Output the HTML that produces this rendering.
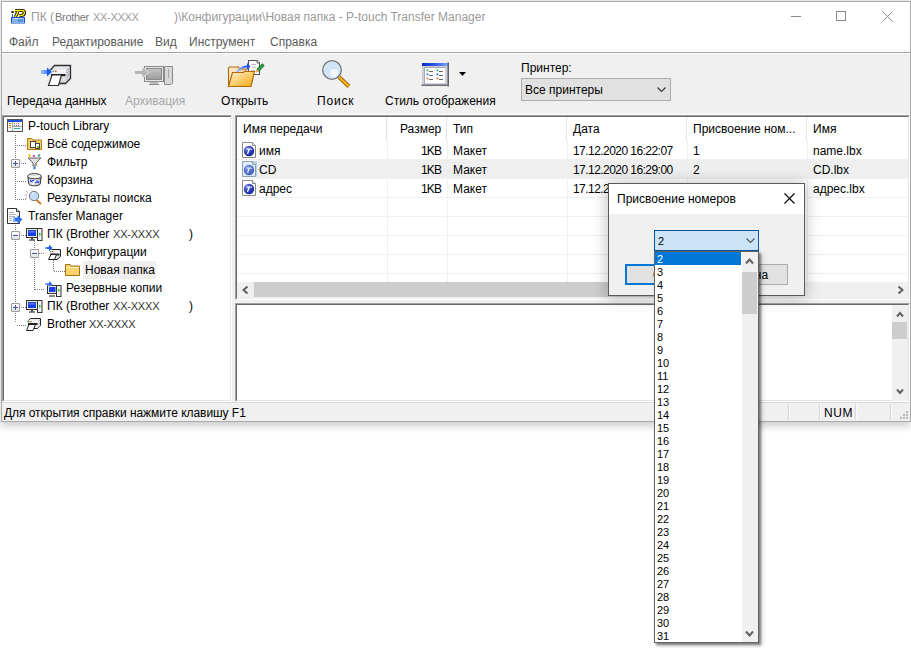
<!DOCTYPE html>
<html><head><meta charset="utf-8"><style>
*{box-sizing:border-box;margin:0;padding:0}
html,body{width:911px;height:648px;overflow:hidden;background:#fff}
body{position:relative;font-family:"Liberation Sans",sans-serif;font-size:12px;color:#000;line-height:14px}
.a{position:absolute;white-space:pre}
svg.a{overflow:visible}
</style></head><body>
<div class="a" style="left:0px;top:0px;width:911px;height:422px;background:#f0f0f0;box-shadow:0 4px 8px rgba(0,0,0,.2)"></div>
<div class="a" style="left:0px;top:0px;width:911px;height:1px;background:#e6e6e6;"></div>
<div class="a" style="left:0px;top:0px;width:1px;height:422px;background:#e8e8e8;"></div>
<div class="a" style="left:1px;top:1px;width:910px;height:421px;background:transparent;border:1px solid #aaa"></div>
<div class="a" style="left:2px;top:2px;width:908px;height:30px;background:#fff;"></div>
<svg class="a" style="left:10px;top:9px;" width="16" height="16" viewBox="0 0 16 16">
<path d="M2 5 L3 5 L3 8 L15 8 L15 14.5 L1 14.5 L1 8 L2 8 Z" fill="#1d55c8"/>
<rect x="2" y="9" width="12" height="5" fill="#86b2ee"/>
<rect x="3" y="9" width="10" height="1" fill="#c8def8"/>
<rect x="8" y="10" width="5" height="3" fill="#5b8fe4"/>
<path d="M5 1.5 L12 1.5 C15 1.5,15 5,13 6 L9 7" stroke="#000" stroke-width="3.2" fill="none" stroke-linejoin="round"/>
<path d="M8 2 L5.5 8" stroke="#000" stroke-width="3.2"/>
<path d="M4 3 L1.5 3" stroke="#000" stroke-width="2"/>
<path d="M5 1.5 L12 1.5 C15 1.5,15 5,13 6 L9 7" stroke="#ffee00" stroke-width="1.4" fill="none" stroke-linejoin="round"/>
<path d="M8 2 L5.5 8" stroke="#ffee00" stroke-width="1.5"/>
<path d="M4 3 L2.5 3" stroke="#ffd000" stroke-width="1"/>
</svg>
<div class="a" style="left:31px;top:10px;color:#9a9a9a;">ПК (</div>
<div class="a" style="left:55px;top:10px;color:#7a7a7a;font-size:11px;letter-spacing:-0.3px">Brother</div>
<div class="a" style="left:93px;top:10px;color:#9a9a9a;font-size:11px;letter-spacing:-0.3px">XX-XXXX</div>
<div class="a" style="left:174px;top:10px;color:#9a9a9a;">)\Конфигурации\Новая папка - P-touch Transfer Manager</div>
<div class="a" style="left:791px;top:16px;width:10px;height:1px;background:#8a8a8a;"></div>
<div class="a" style="left:836px;top:11px;width:10px;height:10px;background:transparent;border:1px solid #8a8a8a"></div>
<svg class="a" style="left:882px;top:11px;" width="11" height="11" viewBox="0 0 11 11"><path d="M0.5 0.5 L10.5 10.5 M10.5 0.5 L0.5 10.5" stroke="#8a8a8a" stroke-width="1"/></svg>
<div class="a" style="left:2px;top:32px;width:908px;height:20px;background:#fff;"></div>
<div class="a" style="left:2px;top:50px;width:908px;height:1px;background:#f5f5f5;"></div>
<div class="a" style="left:2px;top:52px;width:908px;height:1px;background:#a0a0a0;"></div>
<div class="a" style="left:9px;top:35px;color:#5a5a5a;">Файл</div>
<div class="a" style="left:52px;top:35px;color:#5a5a5a;">Редактирование</div>
<div class="a" style="left:155px;top:35px;color:#5a5a5a;">Вид</div>
<div class="a" style="left:189px;top:35px;color:#5a5a5a;">Инструмент</div>
<div class="a" style="left:270px;top:35px;color:#5a5a5a;">Справка</div>
<div class="a" style="left:2px;top:53px;width:908px;height:1px;background:#fff;"></div>
<div class="a" style="left:2px;top:114px;width:908px;height:1px;background:#fbfbfb;"></div>
<svg class="a" style="left:40px;top:64px;" width="32" height="23" viewBox="0 0 32 23">
<defs><linearGradient id="ar" x1="0" x2="1"><stop offset="0" stop-color="#a8c8fa"/><stop offset="1" stop-color="#3c7af5"/></linearGradient>
<linearGradient id="pf" x1="0" y1="0" x2="0" y2="1"><stop offset="0" stop-color="#fafafa"/><stop offset="1" stop-color="#d0d0d8"/></linearGradient></defs>
<path d="M10 6 L14.5 1.5 L30.5 1.5 L25.5 6 Z" fill="#e6e6ec"/>
<path d="M25.5 6 L30.5 1.5 L30.5 14.5 L25.5 19.5 Z" fill="#cfcfd8"/>
<rect x="10" y="6" width="15.5" height="13.5" fill="url(#pf)"/>
<path d="M10 6.5 L14.5 1.5 L30.5 1.5 L30.5 14.5 L25.5 19.5 L19 19.5" fill="none" stroke="#2e2e2e" stroke-width="1.3"/>
<path d="M27 6 L29.5 4 M27 9 L29.5 7 M27 12 L29.5 10" stroke="#9a9aa8" stroke-width="0.8"/>
<rect x="11" y="10" width="14.5" height="2.2" fill="#1e1e1e"/>
<path d="M12 11 L21.5 11 L18.5 21.5 L8.5 21.5 Z" fill="#fff" stroke="#2e2e2e" stroke-width="1.2"/>
<rect x="12.5" y="6.5" width="1.6" height="1.6" fill="#30b060"/>
<rect x="15" y="6.5" width="1.6" height="1.6" fill="#f04030"/>
<rect x="0.7" y="6" width="7" height="4" fill="url(#ar)"/>
<path d="M7 3.5 L12 8 L7 12.5 Z" fill="#1f5ef2"/>
</svg>
<svg class="a" style="left:134px;top:65px;" width="40" height="21" viewBox="0 0 40 21">
<defs><linearGradient id="sc" x1="0" y1="0" x2="0" y2="1"><stop offset="0" stop-color="#c4c4c4"/><stop offset="1" stop-color="#9c9c9c"/></linearGradient></defs>
<rect x="10.5" y="1.5" width="19" height="15" fill="#e4e4e4" stroke="#8a8a8a"/>
<rect x="12.5" y="3.5" width="15" height="11" fill="url(#sc)" stroke="#8a8a8a"/>
<path d="M16 18 L24 18 M15 19.5 L25 19.5" stroke="#8a8a8a" stroke-width="1"/>
<rect x="19" y="16" width="2" height="2" fill="#aaa"/>
<path d="M31 1.5 L38.5 1.5 L38.5 18 L37 19.5 L30.5 19.5 L30.5 1.5" fill="#d8d8d8" stroke="#8a8a8a"/>
<path d="M34.5 4 L34.5 13" stroke="#a8a8a8"/>
<path d="M0.5 5.5 L8 5.5 L8 1.5 L14.5 7.5 L8 13.5 L8 9.5 L0.5 9.5 Z" fill="#b4b4b4" stroke="#f6f6f6" stroke-width="0.8"/>
</svg>
<svg class="a" style="left:227px;top:59px;" width="38" height="29" viewBox="0 0 38 29">
<defs><linearGradient id="ff" x1="0" y1="0" x2="1" y2="1"><stop offset="0" stop-color="#fff4dc"/><stop offset="0.45" stop-color="#fdd27a"/><stop offset="1" stop-color="#f2aa10"/></linearGradient>
<linearGradient id="fb" x1="0" y1="0" x2="1" y2="1"><stop offset="0" stop-color="#fff0d8"/><stop offset="1" stop-color="#f6c070"/></linearGradient>
<linearGradient id="oa" x1="0" x2="1"><stop offset="0" stop-color="#9cc4ff"/><stop offset="1" stop-color="#1f50f5"/></linearGradient></defs>
<path d="M1.5 27.5 L1.5 9 L2.5 8 L11.5 8 L12.5 10 L19 10 L19 14 Z" fill="url(#fb)" stroke="#b06a08" stroke-width="1.1"/>
<path d="M21.5 1.5 L30 1.5 L32.5 4 L32.5 15.5 L21.5 15.5 Z" fill="#fafafa" stroke="#555" stroke-width="1.1"/>
<path d="M30 1.5 L30 4 L32.5 4" fill="#eee" stroke="#555" stroke-width="0.8"/>
<path d="M24 5.5 L29 5.5 M25 8.5 L29 8.5 M24 11.5 L28 11.5" stroke="#c4c4c4" stroke-width="1"/>
<path d="M30.5 11.5 L36.5 5.5" stroke="#1a6e2e" stroke-width="3.2"/>
<path d="M30.5 11.5 L36.5 5.5" stroke="#2fae4a" stroke-width="1.6"/>
<path d="M29 13 L31 11" stroke="#f0a060" stroke-width="2"/>
<path d="M10 13 C13 9,16 7.5,20.5 7.5" stroke="url(#oa)" stroke-width="2" fill="none"/>
<path d="M20 4 L23.5 7.5 L20 11 Z" fill="#1f50f5"/>
<path d="M5.5 13.5 L16.5 13.5 L17.5 12.5 L27.5 12.5 L24 27.5 L1.5 27.5 Z" fill="url(#ff)" stroke="#b06a08" stroke-width="1.2"/>
</svg>
<svg class="a" style="left:321px;top:60px;" width="31" height="29" viewBox="0 0 31 29">
<path d="M18 17 L28 26.5" stroke="#a65d00" stroke-width="4"/>
<path d="M18 17 L28 26.5" stroke="#f3b21a" stroke-width="2.4"/>
<circle cx="11" cy="10" r="9.3" fill="#d2e4f8" stroke="#777" stroke-width="1.3"/>
<circle cx="13" cy="13" r="4" fill="#f3f8fe"/>
</svg>
<svg class="a" style="left:421px;top:62px;" width="29" height="25" viewBox="0 0 29 25">
<defs><linearGradient id="tb" x1="0" x2="1"><stop offset="0" stop-color="#0b2bd0"/><stop offset="0.5" stop-color="#3058e0"/><stop offset="1" stop-color="#78a8f8"/></linearGradient></defs>
<rect x="1" y="1" width="27" height="23" fill="#cdcdd6"/>
<rect x="1" y="1" width="26" height="3" fill="url(#tb)"/>
<rect x="26.5" y="0.5" width="1.5" height="24" fill="#5c5c68"/>
<rect x="0.5" y="22.5" width="27.5" height="1.5" fill="#6c6c78"/>
<rect x="3" y="5" width="22" height="17" fill="#a8a8b4"/>
<rect x="4" y="6" width="20.5" height="15.5" fill="#fff"/>
<rect x="5.5" y="7.5" width="1.8" height="1.8" fill="#2fae6a"/><rect x="8" y="9" width="4" height="0.9" fill="#555"/>
<rect x="15.5" y="7.5" width="1.8" height="1.8" fill="#2fae6a"/><rect x="18" y="9" width="4" height="0.9" fill="#555"/>
<rect x="5.5" y="11.5" width="1.8" height="1.8" fill="#2a6ef0"/><rect x="8" y="13" width="4" height="0.9" fill="#555"/>
<rect x="15.5" y="11.5" width="1.8" height="1.8" fill="#2a6ef0"/><rect x="18" y="13" width="4" height="0.9" fill="#555"/>
<rect x="5.5" y="15.5" width="1.8" height="1.8" fill="#d2782a"/><rect x="8" y="17" width="4" height="0.9" fill="#555"/>
<rect x="15.5" y="15.5" width="1.8" height="1.8" fill="#d2782a"/><rect x="18" y="17" width="4" height="0.9" fill="#555"/>
</svg>
<svg class="a" style="left:459px;top:72px;" width="8" height="5" viewBox="0 0 8 5"><path d="M0 0 L7 0 L3.5 4 Z" fill="#000"/></svg>
<div class="a" style="left:7px;top:94px;">Передача данных</div>
<div class="a" style="left:125px;top:94px;color:#a8a8a8;">Архивация</div>
<div class="a" style="left:221px;top:94px;">Открыть</div>
<div class="a" style="left:317px;top:94px;letter-spacing:0.8px">Поиск</div>
<div class="a" style="left:385px;top:94px;">Стиль отображения</div>
<div class="a" style="left:521px;top:61px;">Принтер:</div>
<div class="a" style="left:521px;top:78px;width:150px;height:23px;background:#e1e1e1;border:1px solid #adadad"></div>
<div class="a" style="left:525px;top:83px;">Все принтеры</div>
<svg class="a" style="left:657px;top:87px;" width="10" height="6" viewBox="0 0 10 6"><path d="M0.5 0.5 L4.5 4.5 L8.5 0.5" stroke="#333" stroke-width="1.1" fill="none"/></svg>
<div class="a" style="left:2px;top:115px;width:230px;height:287px;background:#fff;border-style:solid;border-width:1px;border-color:#a0a0a0 #fff #fff #a0a0a0"></div>
<div class="a" style="left:3px;top:116px;width:228px;height:285px;background:transparent;border-style:solid;border-width:1px;border-color:#696969 #e3e3e3 #e3e3e3 #696969"></div>
<div class="a" style="left:235px;top:115px;width:675px;height:185px;background:#fff;border-style:solid;border-width:1px;border-color:#a0a0a0 #fff #fff #a0a0a0"></div>
<div class="a" style="left:236px;top:116px;width:673px;height:183px;background:transparent;border-style:solid;border-width:1px;border-color:#696969 #e3e3e3 #e3e3e3 #696969"></div>
<div class="a" style="left:235px;top:303px;width:675px;height:99px;background:#fff;border-style:solid;border-width:1px;border-color:#a0a0a0 #fff #fff #a0a0a0"></div>
<div class="a" style="left:236px;top:304px;width:673px;height:97px;background:transparent;border-style:solid;border-width:1px;border-color:#696969 #e3e3e3 #e3e3e3 #696969"></div>
<div class="a" style="left:15px;top:135px;width:1px;height:65px;background:transparent;background-image:repeating-linear-gradient(to bottom,#7c7c7c 0 1px,transparent 1px 2px)"></div>
<div class="a" style="left:15px;top:225px;width:1px;height:97px;background:transparent;background-image:repeating-linear-gradient(to bottom,#7c7c7c 0 1px,transparent 1px 2px)"></div>
<div class="a" style="left:17px;top:145px;width:10px;height:1px;background:transparent;background-image:repeating-linear-gradient(to right,#7c7c7c 0 1px,transparent 1px 2px)"></div>
<div class="a" style="left:17px;top:163px;width:10px;height:1px;background:transparent;background-image:repeating-linear-gradient(to right,#7c7c7c 0 1px,transparent 1px 2px)"></div>
<div class="a" style="left:17px;top:181px;width:10px;height:1px;background:transparent;background-image:repeating-linear-gradient(to right,#7c7c7c 0 1px,transparent 1px 2px)"></div>
<div class="a" style="left:17px;top:199px;width:10px;height:1px;background:transparent;background-image:repeating-linear-gradient(to right,#7c7c7c 0 1px,transparent 1px 2px)"></div>
<div class="a" style="left:17px;top:235px;width:10px;height:1px;background:transparent;background-image:repeating-linear-gradient(to right,#7c7c7c 0 1px,transparent 1px 2px)"></div>
<div class="a" style="left:17px;top:307px;width:10px;height:1px;background:transparent;background-image:repeating-linear-gradient(to right,#7c7c7c 0 1px,transparent 1px 2px)"></div>
<div class="a" style="left:17px;top:325px;width:10px;height:1px;background:transparent;background-image:repeating-linear-gradient(to right,#7c7c7c 0 1px,transparent 1px 2px)"></div>
<div class="a" style="left:34px;top:241px;width:1px;height:49px;background:transparent;background-image:repeating-linear-gradient(to bottom,#7c7c7c 0 1px,transparent 1px 2px)"></div>
<div class="a" style="left:35px;top:253px;width:10px;height:1px;background:transparent;background-image:repeating-linear-gradient(to right,#7c7c7c 0 1px,transparent 1px 2px)"></div>
<div class="a" style="left:35px;top:289px;width:10px;height:1px;background:transparent;background-image:repeating-linear-gradient(to right,#7c7c7c 0 1px,transparent 1px 2px)"></div>
<div class="a" style="left:53px;top:260px;width:1px;height:12px;background:transparent;background-image:repeating-linear-gradient(to bottom,#7c7c7c 0 1px,transparent 1px 2px)"></div>
<div class="a" style="left:54px;top:271px;width:11px;height:1px;background:transparent;background-image:repeating-linear-gradient(to right,#7c7c7c 0 1px,transparent 1px 2px)"></div>
<div class="a" style="left:11px;top:159px;width:9px;height:9px;background:linear-gradient(#fff,#e4e4e4);border:1px solid #9a9a9a;border-radius:1px"></div>
<div class="a" style="left:13px;top:163px;width:5px;height:1px;background:#3a5a9a;"></div>
<div class="a" style="left:15px;top:161px;width:1px;height:5px;background:#3a5a9a;"></div>
<div class="a" style="left:11px;top:231px;width:9px;height:9px;background:linear-gradient(#fff,#e4e4e4);border:1px solid #9a9a9a;border-radius:1px"></div>
<div class="a" style="left:13px;top:235px;width:5px;height:1px;background:#3a5a9a;"></div>
<div class="a" style="left:30px;top:249px;width:9px;height:9px;background:linear-gradient(#fff,#e4e4e4);border:1px solid #9a9a9a;border-radius:1px"></div>
<div class="a" style="left:32px;top:253px;width:5px;height:1px;background:#3a5a9a;"></div>
<div class="a" style="left:11px;top:303px;width:9px;height:9px;background:linear-gradient(#fff,#e4e4e4);border:1px solid #9a9a9a;border-radius:1px"></div>
<div class="a" style="left:13px;top:307px;width:5px;height:1px;background:#3a5a9a;"></div>
<div class="a" style="left:15px;top:305px;width:1px;height:5px;background:#3a5a9a;"></div>
<svg class="a" style="left:7px;top:119px;" width="16" height="13" viewBox="0 0 16 13">
<rect x="0.5" y="0.5" width="15" height="12" fill="#f4f4f4" stroke="#555"/>
<rect x="1" y="1" width="14" height="2" fill="#2050e0"/>
<rect x="5" y="3" width="1" height="9" fill="#aaa"/>
<rect x="6" y="7" width="9" height="1" fill="#aaa"/>
<rect x="2" y="4" width="2" height="1" fill="#d89020"/><rect x="2" y="6" width="2" height="1" fill="#d89020"/><rect x="2" y="8" width="2" height="1" fill="#d89020"/>
<rect x="7" y="4" width="1" height="1" fill="#2c2"/><rect x="9" y="4" width="1" height="1" fill="#d92"/><rect x="11" y="4" width="1" height="1" fill="#e3a"/>
<rect x="7" y="6" width="1" height="1" fill="#36e"/><rect x="9" y="6" width="1" height="1" fill="#e3a"/><rect x="11" y="6" width="1" height="1" fill="#36e"/>
<path d="M7 10 L8 9 L9 10 L10 9 L11 10 L12 9 L13 10" stroke="#3aa" fill="none"/>
</svg>
<svg class="a" style="left:27px;top:137px;" width="15" height="13" viewBox="0 0 15 13">
<path d="M0.5 1.5 L5 1.5 L6 3 L14.5 3 L14.5 12.5 L0.5 12.5 Z" fill="#f7cf6a" stroke="#b07a10"/>
<rect x="3.5" y="4.5" width="5" height="6" fill="#fff" stroke="#444"/>
<rect x="8.5" y="6.5" width="4" height="5" fill="#fff" stroke="#444"/>
<rect x="10" y="9" width="2" height="2" fill="#6c3"/>
</svg>
<svg class="a" style="left:27px;top:154px;" width="15" height="15" viewBox="0 0 15 15">
<circle cx="2.5" cy="1.5" r="1.3" fill="#f5c000"/><circle cx="7" cy="2" r="1.3" fill="#e060c0"/><circle cx="12" cy="1.5" r="1.3" fill="#30b090"/>
<path d="M1 4 L14 4 L9 9 L9 12 L6 12 L6 9 Z" fill="#ddd" stroke="#555" stroke-width="0.9"/>
<circle cx="7.5" cy="14" r="1.2" fill="#3070f0"/>
</svg>
<svg class="a" style="left:27px;top:173px;" width="15" height="14" viewBox="0 0 15 14">
<defs><linearGradient id="rb" x1="0" x2="1"><stop offset="0" stop-color="#c8c8c8"/><stop offset="0.4" stop-color="#f4f4f4"/><stop offset="1" stop-color="#b0b0b0"/></linearGradient></defs>
<path d="M0.8 3.5 L1.8 11 C2.5 13.3,12.5 13.3,13.2 11 L14.2 3.5" fill="url(#rb)" stroke="#333"/>
<ellipse cx="7.5" cy="3.2" rx="6.8" ry="2.6" fill="#fff" stroke="#333"/>
<path d="M3 3.5 C4 1.5,6 1.5,7 3 C8 1.5,10.5 1.5,12 3.5" stroke="#bbb" stroke-width="0.8" fill="none"/>
<path d="M4 8.2 L7 7.2" stroke="#1a3cf0" stroke-width="1.2"/>
<path d="M3.5 6.8 L3.8 8.6 L5.4 9" stroke="#1a3cf0" stroke-width="1" fill="none"/>
<path d="M11 8.8 L8 9.8" stroke="#1a3cf0" stroke-width="1.2"/>
<path d="M11.5 10.2 L11.2 8.4 L9.6 8" stroke="#1a3cf0" stroke-width="1" fill="none"/>
</svg>
<svg class="a" style="left:24px;top:190px;" width="19" height="15" viewBox="0 0 19 15">
<path d="M2 1 L3.5 2.5 M1 5 L3 5 M1.5 8.5 L3 7.5" stroke="#888" stroke-width="0.8"/>
<path d="M12.5 10 L17 14" stroke="#d07010" stroke-width="1.8"/>
<circle cx="10" cy="6" r="4.7" fill="#c4dcf6" stroke="#777" stroke-width="1"/>
<path d="M8 4 L10 3" stroke="#fff" stroke-width="1"/>
</svg>
<svg class="a" style="left:7px;top:208px;" width="16" height="16" viewBox="0 0 16 16">
<path d="M0.5 0.5 L9.5 0.5 L12.5 3.5 L12.5 15.5 L0.5 15.5 Z" fill="#fff" stroke="#333"/>
<path d="M9.5 0.5 L9.5 3.5 L12.5 3.5" fill="#eee" stroke="#333"/>
<path d="M2 4.5 L7 4.5 M2 6.5 L9 6.5 M2 8.5 L8 8.5 M2 10.5 L5 10.5 M2 12.5 L5 12.5" stroke="#b0b0b0"/>
<path d="M6 9.5 L10.5 9.5 L10.5 7 L15.5 11.5 L10.5 16 L10.5 13.5 L6 13.5 Z" fill="#2f72f0"/>
<rect x="6" y="9.5" width="2" height="4" fill="#8ab4fa"/>
</svg>
<svg class="a" style="left:26px;top:228px;" width="17" height="13" viewBox="0 0 17 13">
<rect x="0.5" y="0.5" width="11" height="9" fill="#e8e8e8" stroke="#333"/>
<rect x="2" y="2" width="8" height="6" fill="#1a3ee8"/>
<rect x="3" y="3" width="6" height="1.5" fill="#5a7af0"/>
<path d="M3 12 L9 12" stroke="#333" stroke-width="1.2"/>
<rect x="5" y="10" width="2" height="1.5" fill="#444"/>
<rect x="11.5" y="0.5" width="4.5" height="12" fill="#f0f0f0" stroke="#333"/>
<rect x="13" y="5" width="1.5" height="2.5" fill="#2c2"/>
</svg>
<svg class="a" style="left:26px;top:300px;" width="17" height="13" viewBox="0 0 17 13">
<rect x="0.5" y="0.5" width="11" height="9" fill="#e8e8e8" stroke="#333"/>
<rect x="2" y="2" width="8" height="6" fill="#1a3ee8"/>
<rect x="3" y="3" width="6" height="1.5" fill="#5a7af0"/>
<path d="M3 12 L9 12" stroke="#333" stroke-width="1.2"/>
<rect x="5" y="10" width="2" height="1.5" fill="#444"/>
<rect x="11.5" y="0.5" width="4.5" height="12" fill="#f0f0f0" stroke="#333"/>
<rect x="13" y="5" width="1.5" height="2.5" fill="#2c2"/>
</svg>
<svg class="a" style="left:44px;top:244px;" width="18" height="17" viewBox="0 0 18 17">
<path d="M7.5 5.5 L16.5 5.5 L16.5 12.5 L13 15.5 L5 15.5" fill="#e4e4e4" stroke="#222" stroke-width="1"/>
<rect x="5.5" y="7.5" width="10" height="1.5" fill="#f8f8f8"/>
<rect x="6" y="9.5" width="9.5" height="2" fill="#333"/>
<path d="M7 10.5 L12.5 10.5 L10.5 15.5 L4.5 15.5 Z" fill="#fff" stroke="#222" stroke-width="1"/>
<rect x="6" y="7" width="1.3" height="1.3" fill="#3b3"/><rect x="8" y="7" width="1.3" height="1.3" fill="#e44"/>
<path d="M1 3 L5 3 L5 0.5 L8.5 4 L5 7.5 L5 5 L1 5 Z" fill="#1f5ef2"/>
<rect x="1" y="3" width="2" height="2" fill="#7ea8f8"/>
</svg>
<div class="a" style="left:83px;top:261px;width:73px;height:18px;background:#efefef;"></div>
<svg class="a" style="left:65px;top:263px;" width="15" height="13" viewBox="0 0 15 13">
<path d="M0.5 1.5 L5 1.5 L6 3 L14.5 3 L14.5 12.5 L0.5 12.5 Z" fill="#fbd36a" stroke="#a87010"/>
<rect x="1" y="4" width="13" height="1" fill="#fff3c0"/>
</svg>
<svg class="a" style="left:44px;top:280px;" width="18" height="17" viewBox="0 0 18 17">
<rect x="3.5" y="5.5" width="9" height="8" fill="#e8e8e8" stroke="#333"/>
<rect x="5" y="7" width="6.5" height="5" fill="#1a3ee8"/>
<path d="M5 16 L11 16" stroke="#333" stroke-width="1.2"/>
<rect x="12.5" y="5.5" width="4.5" height="11" fill="#f0f0f0" stroke="#333"/>
<rect x="14" y="9" width="1.5" height="2.5" fill="#2c2"/>
<path d="M1 3 L5 3 L5 0.5 L8.5 4 L5 7.5 L5 5 L1 5 Z" fill="#1f5ef2" stroke="#fff" stroke-width="0.5"/>
<rect x="1" y="3" width="2" height="2" fill="#7ea8f8"/>
</svg>
<svg class="a" style="left:26px;top:317px;" width="16" height="15" viewBox="0 0 16 15">
<path d="M1.5 4 L4.5 1 L15 1 L15 8.5 L11.5 12 L1.5 12 Z" fill="#ececec"/>
<path d="M1.5 4.5 L4.5 1.5 L14.5 1.5 L14.5 8.5 L11.5 11.5 L6 11.5" fill="none" stroke="#222" stroke-width="1"/>
<rect x="2" y="3.5" width="10" height="2" fill="#fcfcfc"/>
<path d="M12.5 4 L14 3 M12.5 7 L14 6 M12.5 10 L14 9" stroke="#999" stroke-width="0.8"/>
<rect x="2" y="6" width="9.5" height="2" fill="#222"/>
<path d="M3 7.5 L9.5 7.5 L7 13.5 L0.5 13.5 Z" fill="#fff" stroke="#222" stroke-width="1"/>
<rect x="2" y="4" width="1.4" height="1.4" fill="#3b3"/><rect x="4.2" y="4" width="1.4" height="1.4" fill="#e44"/>
</svg>
<div class="a" style="left:28px;top:119px;">P-touch Library</div>
<div class="a" style="left:47px;top:137px;">Всё содержимое</div>
<div class="a" style="left:47px;top:155px;">Фильтр</div>
<div class="a" style="left:47px;top:173px;">Корзина</div>
<div class="a" style="left:47px;top:191px;">Результаты поиска</div>
<div class="a" style="left:28px;top:209px;">Transfer Manager</div>
<div class="a" style="left:47px;top:227px;">ПК (Brother</div>
<div class="a" style="left:66px;top:245px;">Конфигурации</div>
<div class="a" style="left:85px;top:263px;">Новая папка</div>
<div class="a" style="left:66px;top:281px;">Резервные копии</div>
<div class="a" style="left:47px;top:299px;">ПК (Brother</div>
<div class="a" style="left:47px;top:317px;">Brother</div>
<div class="a" style="left:189px;top:227px;">)</div>
<div class="a" style="left:189px;top:299px;">)</div>
<div class="a" style="left:113px;top:227px;color:#333;font-size:11px;letter-spacing:-0.2px">XX-XXXX</div>
<div class="a" style="left:113px;top:299px;color:#333;font-size:11px;letter-spacing:-0.2px">XX-XXXX</div>
<div class="a" style="left:89px;top:317px;color:#333;font-size:11px;letter-spacing:-0.2px">XX-XXXX</div>
<div class="a" style="left:386px;top:117px;width:1px;height:24px;background:#e5e5e5;"></div>
<div class="a" style="left:446px;top:117px;width:1px;height:24px;background:#e5e5e5;"></div>
<div class="a" style="left:566px;top:117px;width:1px;height:24px;background:#e5e5e5;"></div>
<div class="a" style="left:686px;top:117px;width:1px;height:24px;background:#e5e5e5;"></div>
<div class="a" style="left:806px;top:117px;width:1px;height:24px;background:#e5e5e5;"></div>
<div class="a" style="left:237px;top:159px;width:671px;height:1px;background:#f0f0f0;"></div>
<div class="a" style="left:237px;top:178px;width:671px;height:1px;background:#f0f0f0;"></div>
<div class="a" style="left:237px;top:197px;width:671px;height:1px;background:#f0f0f0;"></div>
<div class="a" style="left:237px;top:216px;width:671px;height:1px;background:#f0f0f0;"></div>
<div class="a" style="left:237px;top:235px;width:671px;height:1px;background:#f0f0f0;"></div>
<div class="a" style="left:237px;top:254px;width:671px;height:1px;background:#f0f0f0;"></div>
<div class="a" style="left:237px;top:273px;width:671px;height:1px;background:#f0f0f0;"></div>
<div class="a" style="left:387px;top:141px;width:1px;height:141px;background:#f0f0f0;"></div>
<div class="a" style="left:447px;top:141px;width:1px;height:141px;background:#f0f0f0;"></div>
<div class="a" style="left:567px;top:141px;width:1px;height:141px;background:#f0f0f0;"></div>
<div class="a" style="left:687px;top:141px;width:1px;height:141px;background:#f0f0f0;"></div>
<div class="a" style="left:807px;top:141px;width:1px;height:141px;background:#f0f0f0;"></div>
<div class="a" style="left:257px;top:160px;width:651px;height:18px;background:#efefef;"></div>
<div class="a" style="left:243px;top:122px;">Имя передачи</div>
<div class="a" style="left:453px;top:122px;">Тип</div>
<div class="a" style="left:573px;top:122px;">Дата</div>
<div class="a" style="left:693px;top:122px;">Присвоение ном...</div>
<div class="a" style="left:813px;top:122px;">Имя</div>
<div class="a" style="left:400px;top:122px;">Размер</div>
<svg class="a" style="left:242px;top:142px;" width="15" height="16" viewBox="0 0 15 16">
<defs><radialGradient id="gl" cx="0.35" cy="0.3" r="0.8"><stop offset="0" stop-color="#7c8ce8"/><stop offset="0.5" stop-color="#3040b8"/><stop offset="1" stop-color="#10209a"/></radialGradient></defs>
<path d="M0.5 0.5 L10.5 0.5 L13.5 3.5 L13.5 15.5 L0.5 15.5 Z" fill="#fff" stroke="#8a8a8a"/>
<path d="M10.5 0.5 L10.5 3.5 L13.5 3.5" fill="#f4f4f4" stroke="#8a8a8a"/>
<circle cx="7" cy="9" r="5.2" fill="url(#gl)"/>
<path d="M4.5 7 L9.5 7 M7.3 7 L5.5 12" stroke="#fff" stroke-width="1.2" fill="none"/>
<path d="M9.5 7 L10 8" stroke="#fff" stroke-width="0.8"/>
</svg>
<div class="a" style="left:259px;top:144px;">имя</div>
<div class="a" style="left:421px;top:144px;letter-spacing:-0.9px">1KB</div>
<div class="a" style="left:453px;top:144px;">Макет</div>
<div class="a" style="left:573px;top:144px;letter-spacing:-0.55px">17.12.2020 16:22:07</div>
<div class="a" style="left:693px;top:144px;">1</div>
<div class="a" style="left:813px;top:144px;">name.lbx</div>
<svg class="a" style="left:242px;top:161px;" width="15" height="16" viewBox="0 0 15 16"><rect x="0" y="0" width="15" height="16" fill="#c4dcf2"/>
<defs><radialGradient id="gl" cx="0.35" cy="0.3" r="0.8"><stop offset="0" stop-color="#7c8ce8"/><stop offset="0.5" stop-color="#3040b8"/><stop offset="1" stop-color="#10209a"/></radialGradient></defs>
<path d="M0.5 0.5 L10.5 0.5 L13.5 3.5 L13.5 15.5 L0.5 15.5 Z" fill="#fff" stroke="#8a8a8a"/>
<path d="M10.5 0.5 L10.5 3.5 L13.5 3.5" fill="#f4f4f4" stroke="#8a8a8a"/>
<circle cx="7" cy="9" r="5.2" fill="url(#gl)"/>
<path d="M4.5 7 L9.5 7 M7.3 7 L5.5 12" stroke="#fff" stroke-width="1.2" fill="none"/>
<path d="M9.5 7 L10 8" stroke="#fff" stroke-width="0.8"/>
<rect x="0" y="0" width="15" height="16" fill="#9cc8f0" fill-opacity="0.35"/></svg>
<div class="a" style="left:259px;top:163px;">CD</div>
<div class="a" style="left:421px;top:163px;letter-spacing:-0.9px">1KB</div>
<div class="a" style="left:453px;top:163px;">Макет</div>
<div class="a" style="left:573px;top:163px;letter-spacing:-0.55px">17.12.2020 16:29:00</div>
<div class="a" style="left:693px;top:163px;">2</div>
<div class="a" style="left:813px;top:163px;">CD.lbx</div>
<svg class="a" style="left:242px;top:180px;" width="15" height="16" viewBox="0 0 15 16">
<defs><radialGradient id="gl" cx="0.35" cy="0.3" r="0.8"><stop offset="0" stop-color="#7c8ce8"/><stop offset="0.5" stop-color="#3040b8"/><stop offset="1" stop-color="#10209a"/></radialGradient></defs>
<path d="M0.5 0.5 L10.5 0.5 L13.5 3.5 L13.5 15.5 L0.5 15.5 Z" fill="#fff" stroke="#8a8a8a"/>
<path d="M10.5 0.5 L10.5 3.5 L13.5 3.5" fill="#f4f4f4" stroke="#8a8a8a"/>
<circle cx="7" cy="9" r="5.2" fill="url(#gl)"/>
<path d="M4.5 7 L9.5 7 M7.3 7 L5.5 12" stroke="#fff" stroke-width="1.2" fill="none"/>
<path d="M9.5 7 L10 8" stroke="#fff" stroke-width="0.8"/>
</svg>
<div class="a" style="left:259px;top:182px;">адрес</div>
<div class="a" style="left:421px;top:182px;letter-spacing:-0.9px">1KB</div>
<div class="a" style="left:453px;top:182px;">Макет</div>
<div class="a" style="left:573px;top:182px;letter-spacing:-0.55px">17.12.2020 16:29:00</div>
<div class="a" style="left:693px;top:182px;"></div>
<div class="a" style="left:813px;top:182px;">адрес.lbx</div>
<div class="a" style="left:237px;top:282px;width:671px;height:17px;background:#f0f0f0;"></div>
<div class="a" style="left:254px;top:282px;width:450px;height:15px;background:#cdcdcd;"></div>
<svg class="a" style="left:242px;top:286px;" width="7" height="8" viewBox="0 0 7 8"><path d="M5.5 0.5 L1.5 4 L5.5 7.5" stroke="#606060" stroke-width="2" fill="none"/></svg>
<svg class="a" style="left:897px;top:286px;" width="7" height="8" viewBox="0 0 7 8"><path d="M1.5 0.5 L5.5 4 L1.5 7.5" stroke="#606060" stroke-width="2" fill="none"/></svg>
<div class="a" style="left:892px;top:305px;width:16px;height:96px;background:#f0f0f0;"></div>
<div class="a" style="left:892px;top:322px;width:15px;height:17px;background:#cdcdcd;"></div>
<svg class="a" style="left:896px;top:311px;" width="8" height="7" viewBox="0 0 8 7"><path d="M1 5.5 L4 2 L7 5.5" stroke="#606060" stroke-width="2" fill="none"/></svg>
<svg class="a" style="left:896px;top:388px;" width="8" height="7" viewBox="0 0 8 7"><path d="M1 1.5 L4 5 L7 1.5" stroke="#606060" stroke-width="2" fill="none"/></svg>
<div class="a" style="left:2px;top:402px;width:908px;height:1px;background:#d7d7d7;"></div>
<div class="a" style="left:4px;top:406px;letter-spacing:-0.05px">Для открытия справки нажмите клавишу F1</div>
<div class="a" style="left:788px;top:404px;width:1px;height:16px;background:#d7d7d7;"></div>
<div class="a" style="left:789px;top:404px;width:1px;height:16px;background:#fafafa;"></div>
<div class="a" style="left:819px;top:404px;width:1px;height:16px;background:#d7d7d7;"></div>
<div class="a" style="left:820px;top:404px;width:1px;height:16px;background:#fafafa;"></div>
<div class="a" style="left:855px;top:404px;width:1px;height:16px;background:#d7d7d7;"></div>
<div class="a" style="left:856px;top:404px;width:1px;height:16px;background:#fafafa;"></div>
<div class="a" style="left:890px;top:404px;width:1px;height:16px;background:#d7d7d7;"></div>
<div class="a" style="left:891px;top:404px;width:1px;height:16px;background:#fafafa;"></div>
<div class="a" style="left:824px;top:406px;letter-spacing:0.6px">NUM</div>
<svg class="a" style="left:899px;top:410px;" width="10" height="10" viewBox="0 0 10 10"><rect x="7" y="1" width="2" height="2" fill="#bcbcbc"/><rect x="4" y="4" width="2" height="2" fill="#bcbcbc"/><rect x="7" y="4" width="2" height="2" fill="#bcbcbc"/><rect x="1" y="7" width="2" height="2" fill="#bcbcbc"/><rect x="4" y="7" width="2" height="2" fill="#bcbcbc"/><rect x="7" y="7" width="2" height="2" fill="#bcbcbc"/></svg>
<div class="a" style="left:608px;top:183px;width:197px;height:113px;background:#f0f0f0;border:1px solid #5a5a5a;box-shadow:0 1px 14px 2px rgba(0,0,0,.22)"></div>
<div class="a" style="left:609px;top:184px;width:195px;height:30px;background:#fff;"></div>
<div class="a" style="left:617px;top:192px;">Присвоение номеров</div>
<svg class="a" style="left:784px;top:193px;" width="11" height="11" viewBox="0 0 11 11"><path d="M0.5 0.5 L10.5 10.5 M10.5 0.5 L0.5 10.5" stroke="#000" stroke-width="1.1"/></svg>
<div class="a" style="left:625px;top:264px;width:76px;height:21px;background:#e1e1e1;border:2px solid #0078d7"></div>
<div class="a" style="left:712px;top:264px;width:76px;height:21px;background:#e1e1e1;border:1px solid #adadad"></div>
<div class="a" style="left:725px;top:268px;">Отмена</div>
<div class="a" style="left:653px;top:268px;">OK</div>
<div class="a" style="left:654px;top:230px;width:105px;height:21px;background:#cce4f7;border:1px solid #005499"></div>
<div class="a" style="left:658px;top:234px;font-size:11px;">2</div>
<svg class="a" style="left:746px;top:238px;" width="10" height="6" viewBox="0 0 10 6"><path d="M0.5 0.5 L4.5 4.5 L8.5 0.5" stroke="#555" stroke-width="1.1" fill="none"/></svg>
<div class="a" style="left:654px;top:251px;width:105px;height:392px;background:#fff;border:1px solid #646464;box-shadow:2px 2px 2px rgba(0,0,0,.42),3px 3px 5px rgba(0,0,0,.18)"></div>
<div class="a" style="left:655px;top:252px;width:86px;height:13px;background:#0078d7;"></div>
<div class="a" style="left:657px;top:253px;color:#fff;font-size:11px;line-height:13px">2</div>
<div class="a" style="left:657px;top:266px;color:#000;font-size:11px;line-height:13px">3</div>
<div class="a" style="left:657px;top:279px;color:#000;font-size:11px;line-height:13px">4</div>
<div class="a" style="left:657px;top:292px;color:#000;font-size:11px;line-height:13px">5</div>
<div class="a" style="left:657px;top:305px;color:#000;font-size:11px;line-height:13px">6</div>
<div class="a" style="left:657px;top:318px;color:#000;font-size:11px;line-height:13px">7</div>
<div class="a" style="left:657px;top:331px;color:#000;font-size:11px;line-height:13px">8</div>
<div class="a" style="left:657px;top:344px;color:#000;font-size:11px;line-height:13px">9</div>
<div class="a" style="left:657px;top:357px;color:#000;font-size:11px;line-height:13px">10</div>
<div class="a" style="left:657px;top:370px;color:#000;font-size:11px;line-height:13px">11</div>
<div class="a" style="left:657px;top:383px;color:#000;font-size:11px;line-height:13px">12</div>
<div class="a" style="left:657px;top:396px;color:#000;font-size:11px;line-height:13px">13</div>
<div class="a" style="left:657px;top:409px;color:#000;font-size:11px;line-height:13px">14</div>
<div class="a" style="left:657px;top:422px;color:#000;font-size:11px;line-height:13px">15</div>
<div class="a" style="left:657px;top:435px;color:#000;font-size:11px;line-height:13px">16</div>
<div class="a" style="left:657px;top:448px;color:#000;font-size:11px;line-height:13px">17</div>
<div class="a" style="left:657px;top:461px;color:#000;font-size:11px;line-height:13px">18</div>
<div class="a" style="left:657px;top:474px;color:#000;font-size:11px;line-height:13px">19</div>
<div class="a" style="left:657px;top:487px;color:#000;font-size:11px;line-height:13px">20</div>
<div class="a" style="left:657px;top:500px;color:#000;font-size:11px;line-height:13px">21</div>
<div class="a" style="left:657px;top:513px;color:#000;font-size:11px;line-height:13px">22</div>
<div class="a" style="left:657px;top:526px;color:#000;font-size:11px;line-height:13px">23</div>
<div class="a" style="left:657px;top:539px;color:#000;font-size:11px;line-height:13px">24</div>
<div class="a" style="left:657px;top:552px;color:#000;font-size:11px;line-height:13px">25</div>
<div class="a" style="left:657px;top:565px;color:#000;font-size:11px;line-height:13px">26</div>
<div class="a" style="left:657px;top:578px;color:#000;font-size:11px;line-height:13px">27</div>
<div class="a" style="left:657px;top:591px;color:#000;font-size:11px;line-height:13px">28</div>
<div class="a" style="left:657px;top:604px;color:#000;font-size:11px;line-height:13px">29</div>
<div class="a" style="left:657px;top:617px;color:#000;font-size:11px;line-height:13px">30</div>
<div class="a" style="left:657px;top:630px;color:#000;font-size:11px;line-height:13px">31</div>
<div class="a" style="left:742px;top:252px;width:16px;height:390px;background:#f0f0f0;"></div>
<div class="a" style="left:742px;top:272px;width:15px;height:42px;background:#cdcdcd;"></div>
<svg class="a" style="left:745px;top:258px;" width="9" height="7" viewBox="0 0 9 7"><path d="M1 5.5 L4.5 1.5 L8 5.5" stroke="#606060" stroke-width="2" fill="none"/></svg>
<svg class="a" style="left:745px;top:630px;" width="9" height="7" viewBox="0 0 9 7"><path d="M1 1.5 L4.5 5.5 L8 1.5" stroke="#606060" stroke-width="2" fill="none"/></svg>
</body></html>
